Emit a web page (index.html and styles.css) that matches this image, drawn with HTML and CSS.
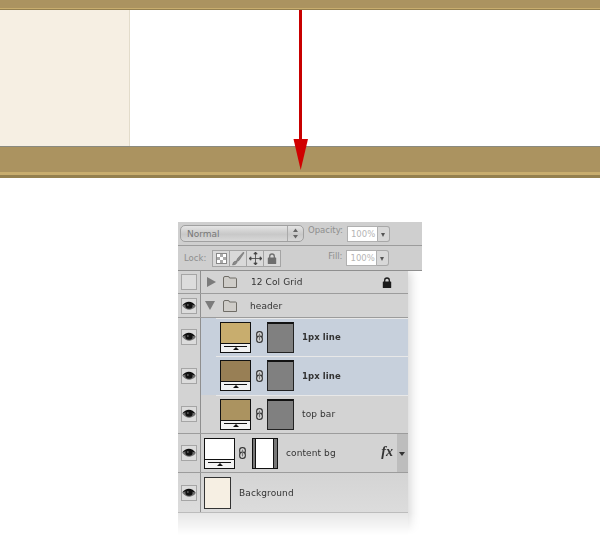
FILE: index.html
```html
<!DOCTYPE html>
<html lang="en">
<head>
    <meta charset="UTF-8">
    <title>Header layers</title>
    <link rel="stylesheet" href="styles.css">
</head>
<body>

<svg class="defs" width="0" height="0">
    <symbol id="eye" viewBox="0 0 14 10">
        <path d="M0.500 5 C3 1 11 1 13.500 5.500 C10 9.800 4 9.800 0.500 5Z" fill="#6e6e6e"/>
        <path d="M0 4.800 C4 -0.500 10 -0.500 14 5.200 C10 2.800 4 2.800 0 4.800Z" fill="#0c0c0c"/>
        <ellipse cx="7" cy="4.800" rx="3.600" ry="3" fill="#111"/>
        <circle cx="5.900" cy="4" r="0.700" fill="#999"/>
    </symbol>
    <symbol id="folder" viewBox="0 0 16 12">
        <path d="M1.500 11.500 V2 Q1.500 0.500 3 0.500 H6 Q7.500 0.500 7.500 2 H13.500 Q14.500 2 14.500 3 V11.500Z" fill="#cfcdc9" stroke="#6f6c66"/>
    </symbol>
    <symbol id="chain" viewBox="0 0 7 12">
        <rect x="0.700" y="0.600" width="5.600" height="6.200" rx="2.700" fill="#ececec" stroke="#333" stroke-width="1.200"/>
        <rect x="0.700" y="5.200" width="5.600" height="6.200" rx="2.700" fill="#ececec" stroke="#333" stroke-width="1.200"/>
        <rect x="2.700" y="2.500" width="1.600" height="7" fill="#777"/>
    </symbol>
    <symbol id="lock" viewBox="0 0 10 11">
        <path d="M2.700 5 V3.200 Q2.700 1 5 1 Q7.300 1 7.300 3.200 V5" fill="none" stroke="currentColor" stroke-width="1.300"/>
        <rect x="0.800" y="4.500" width="8.400" height="6.500" rx="0.500" fill="currentColor"/>
    </symbol>
</svg>

<div class="band band-top"></div>
<div class="content">
    <div class="sidebar"></div>
    <div class="main"></div>
</div>
<div class="band band-bottom"></div>

<div class="arrow">
    <svg width="16" height="161" viewBox="0 0 16 161">
        <rect x="6" y="0" width="3" height="131" fill="#c80000"/>
        <path d="M0.500 129 H15 L7.700 160Z" fill="#d00000"/>
    </svg>
</div>

<div class="panel">
    <div class="panel-head">
        <div class="tool-row">
            <div class="blend-select">
                <span>Normal</span>
                <span class="stepper">
                    <svg width="7" height="11" viewBox="0 0 7 11"><path d="M3.500 0.500 L6 4 H1Z M1 7 H6 L3.500 10.500Z" fill="#666"/></svg>
                </span>
            </div>
            <span class="tool-label opacity-label">Opacity:</span>
            <div class="pct-box"><span class="pct-val">100%</span><span class="pct-btn"></span></div>
        </div>
        <div class="tool-row lock-row">
            <span class="tool-label">Lock:</span>
            <div class="lock-btns">
                <span class="lock-btn"><span class="checker"></span></span>
                <span class="lock-btn">
                    <svg width="14" height="15" viewBox="0 0 14 15"><path d="M12.500 1 L6.500 7.500 L5 11 L8 9.500 L13 2Z M4.500 10 Q2 10.500 1.500 14 Q5 14 6 11.500Z" fill="#8a8a8a" stroke="#666" stroke-width="0.500"/></svg>
                </span>
                <span class="lock-btn">
                    <svg width="15" height="15" viewBox="0 0 15 15"><path d="M7.500 1 V14 M1 7.500 H14 M5.800 3 L7.500 1 L9.200 3Z M5.800 12 L7.500 14 L9.200 12Z M3 5.800 L1 7.500 L3 9.200Z M12 5.800 L14 7.500 L12 9.200Z" fill="#444" stroke="#444" stroke-width="0.800"/></svg>
                </span>
                <span class="lock-btn lock-grey"><svg width="10" height="11"><use href="#lock"/></svg></span>
            </div>
            <span class="tool-label fill-label">Fill:</span>
            <div class="pct-box"><span class="pct-val">100%</span><span class="pct-btn"></span></div>
        </div>
    </div>

    <div class="layers-wrap">
        <div class="layers">
            <div class="layer row-grid group-row">
                <div class="eye-cell"><span class="eye-box"></span></div>
                <div class="layer-body">
                    <span class="tri tri-right"></span>
                    <svg class="folder" width="16" height="12"><use href="#folder"/></svg>
                    <span class="layer-name">12 Col Grid</span>
                    <svg class="lock-badge" width="10" height="11"><use href="#lock"/></svg>
                </div>
            </div>
            <div class="layer row-header group-row">
                <div class="eye-cell"><span class="eye-box"><svg width="14" height="10"><use href="#eye"/></svg></span></div>
                <div class="layer-body">
                    <span class="tri tri-down"></span>
                    <svg class="folder" width="16" height="12"><use href="#folder"/></svg>
                    <span class="layer-name">header</span>
                </div>
            </div>
            <div class="layer thumb-row selected joined first-nested">
                <div class="eye-cell"><span class="eye-box"><svg width="14" height="10"><use href="#eye"/></svg></span></div>
                <div class="layer-body nested">
                    <div class="thumb"><span class="swatch swatch-light"></span><span class="thumb-foot"><span class="foot-line"></span></span></div>
                    <svg class="chain" width="7" height="12"><use href="#chain"/></svg>
                    <div class="mask"></div>
                    <span class="layer-name bold">1px line</span>
                </div>
            </div>
            <div class="layer thumb-row selected joined">
                <div class="eye-cell"><span class="eye-box"><svg width="14" height="10"><use href="#eye"/></svg></span></div>
                <div class="layer-body nested">
                    <div class="thumb"><span class="swatch swatch-dark"></span><span class="thumb-foot"><span class="foot-line"></span></span></div>
                    <svg class="chain" width="7" height="12"><use href="#chain"/></svg>
                    <div class="mask"></div>
                    <span class="layer-name bold">1px line</span>
                </div>
            </div>
            <div class="layer thumb-row">
                <div class="eye-cell"><span class="eye-box"><svg width="14" height="10"><use href="#eye"/></svg></span></div>
                <div class="layer-body nested">
                    <div class="thumb"><span class="swatch swatch-mid"></span><span class="thumb-foot"><span class="foot-line"></span></span></div>
                    <svg class="chain" width="7" height="12"><use href="#chain"/></svg>
                    <div class="mask"></div>
                    <span class="layer-name">top bar</span>
                </div>
            </div>
            <div class="layer thumb-row">
                <div class="eye-cell"><span class="eye-box"><svg width="14" height="10"><use href="#eye"/></svg></span></div>
                <div class="layer-body">
                    <div class="thumb"><span class="swatch swatch-white"></span><span class="thumb-foot"><span class="foot-line"></span></span></div>
                    <svg class="chain chain-wide" width="7" height="12"><use href="#chain"/></svg>
                    <div class="mask mask-white"></div>
                    <span class="layer-name">content bg</span>
                    <span class="fx">fx</span>
                    <span class="fx-btn"></span>
                </div>
            </div>
            <div class="layer thumb-row last-row">
                <div class="eye-cell"><span class="eye-box"><svg width="14" height="10"><use href="#eye"/></svg></span></div>
                <div class="layer-body">
                    <div class="thumb thumb-plain"></div>
                    <span class="layer-name">Background</span>
                </div>
            </div>
            <div class="panel-fade"></div>
        </div>
    </div>
</div>

</body>
</html>
```

FILE: styles.css
```css
body {
    margin: 0;
    height: 557px;
    overflow: hidden;
    position: relative;
    background-color: #fff;
    font-family: "DejaVu Sans", sans-serif;
    font-size: 9px;
    color: #333;
}
.defs {
    position: absolute;
}
.band {
    background-color: #ab9360;
}
.band-top {
    height: 8px;
    border-bottom: 1px solid #c8ad6e;
    box-shadow: 0 1px 0 #94804f;
    margin-bottom: 1px;
}
.band-bottom {
    height: 25px;
    border-top: 1px solid #8a8a80;
    border-bottom: 3px solid #c8ad6e;
    box-shadow: 0 3px 0 #94804f;
}
.content {
    display: flex;
    height: 136px;
}
.sidebar {
    width: 129px;
    background-color: #f6efe3;
    border-right: 1px solid #e3dccb;
}
.main {
    flex: 1;
}
.arrow {
    position: absolute;
    left: 293px;
    top: 10px;
    line-height: 0;
}

.panel {
    width: 244px;
    margin: 47px 0 0 178px;
}
.panel-head {
    background-color: #cfcfcf;
}
.tool-row {
    display: flex;
    align-items: center;
    height: 23px;
    padding: 0 2px;
    border-bottom: 1px solid #9c9c9c;
}
.lock-row {
    height: 24px;
    padding: 0 2px 0 6px;
    border-bottom: 1px solid #8f8f8f;
}
.blend-select {
    display: flex;
    align-items: center;
    justify-content: space-between;
    box-sizing: border-box;
    width: 124px;
    height: 17px;
    padding-left: 6px;
    border: 1px solid #a0a0a0;
    border-radius: 5px;
    background: linear-gradient(#e4e4e4, #c8c8c8 55%, #d8d8d8);
    color: #777;
}
.stepper {
    display: flex;
    align-items: center;
    justify-content: center;
    width: 15px;
    height: 15px;
    border-left: 1px solid #aaa;
}
.tool-label {
    color: #8e8e8e;
    font-size: 8.5px;
    white-space: nowrap;
}
.opacity-label {
    margin: 0 0 8px 4px;
}
.fill-label {
    margin: 0 0 4px 48px;
}
.pct-box {
    display: flex;
    margin-left: 4px;
}
.pct-val {
    box-sizing: border-box;
    width: 31px;
    height: 16px;
    padding-left: 3px;
    line-height: 14px;
    background: #fff;
    border: 1px solid #b0b0b0;
    color: #b5b5b5;
    font-size: 8.5px;
}
.pct-btn {
    position: relative;
    box-sizing: border-box;
    width: 12px;
    height: 16px;
    border: 1px solid #a8a8a8;
    border-left: 0;
    border-radius: 0 3px 3px 0;
    background-color: #d8d8d8;
}
.pct-btn::after {
    content: "";
    position: absolute;
    left: 3px;
    top: 6px;
    border-top: 4px solid #555;
    border-left: 2px solid transparent;
    border-right: 2px solid transparent;
}
.lock-btns {
    display: flex;
    margin-left: 6px;
}
.lock-btn {
    display: flex;
    align-items: center;
    justify-content: center;
    box-sizing: border-box;
    width: 18px;
    height: 17px;
    border: 1px solid #a4a4a4;
    margin-right: -1px;
    background-color: #d9d9d9;
}
.lock-grey {
    color: #6e6e6e;
}
.checker {
    width: 9px;
    height: 9px;
    background: repeating-conic-gradient(#aaa 0 25%, #fff 0 50%) 0 0 / 6px 6px;
    border: 1px solid #888;
}

.layers-wrap {
    width: 244px;
    mask-image: linear-gradient(#000 calc(100% - 22px), transparent);
}
.layers {
    width: 230px;
    box-shadow: 2px 0 10px rgba(0, 0, 0, 0.18);
}
.layer {
    display: flex;
    box-sizing: border-box;
    border-bottom: 1px solid #9c9c9c;
    background-color: #d3d3d3;
}
.row-grid {
    height: 23px;
}
.row-header {
    height: 24px;
}
.thumb-row {
    height: 39px;
}
.first-nested {
    height: 38px;
}
.last-row {
    height: 40px;
    background: linear-gradient(#d4d4d4, #dcdcdc);
    border-bottom-color: #bcbcbc;
}
.joined {
    border-bottom: 0;
}
.selected .layer-body {
    background-color: #c7d0dc;
}
.eye-cell {
    display: flex;
    align-items: center;
    justify-content: center;
    flex-shrink: 0;
    width: 22px;
    border-right: 1px solid #8f8f8f;
}
.eye-box {
    display: flex;
    align-items: center;
    justify-content: center;
    box-sizing: border-box;
    width: 16px;
    height: 16px;
    border: 1px solid #a5a5a5;
    background-color: #dcdcdc;
}
.layer-body {
    position: relative;
    display: flex;
    align-items: center;
    flex: 1;
    min-width: 0;
    padding-left: 3px;
}
.nested {
    padding-left: 19px;
}
.nested::before {
    content: "";
    position: absolute;
    left: 15px;
    right: 0;
    top: 0;
    height: 1px;
    background-color: #e8e8e8;
}
.row-grid .layer-body {
    padding-left: 6px;
}
.row-header .layer-body {
    padding-left: 4px;
}
.tri {
    width: 0;
    height: 0;
}
.tri-right {
    border-left: 9px solid #7b7b7b;
    border-top: 5px solid transparent;
    border-bottom: 5px solid transparent;
}
.tri-down {
    border-top: 9px solid #7b7b7b;
    border-left: 5px solid transparent;
    border-right: 5px solid transparent;
}
.folder {
    margin-left: 6px;
}
.row-header .folder {
    margin-left: 7px;
}
.group-row .layer-name {
    margin-left: 13px;
}
.row-header .layer-name {
    margin-left: 12px;
}
.layer-name {
    margin-left: 8px;
    white-space: nowrap;
    letter-spacing: 0.1px;
}
.bold {
    font-weight: bold;
    font-size: 8.5px;
}
.lock-badge {
    position: absolute;
    right: 16px;
    top: 6px;
    color: #1c1c1c;
}
.thumb {
    display: flex;
    flex-direction: column;
    flex-shrink: 0;
    box-sizing: border-box;
    width: 31px;
    height: 31px;
    border: 1px solid #111;
}
.swatch {
    flex: 1;
}
.swatch-light {
    background-color: #c8ad6e;
}
.swatch-dark {
    background-color: #987f55;
}
.swatch-mid {
    background-color: #ab9360;
}
.swatch-white {
    background-color: #fff;
}
.thumb-foot {
    position: relative;
    box-sizing: border-box;
    height: 9px;
    background-color: #f2f2f2;
    border-top: 1px solid #111;
}
.foot-line {
    position: absolute;
    left: 3px;
    right: 3px;
    top: 2px;
    height: 1px;
    background-color: #111;
}
.foot-line::after {
    content: "";
    position: absolute;
    left: 9px;
    top: 1px;
    border-bottom: 3px solid #111;
    border-left: 3px solid transparent;
    border-right: 3px solid transparent;
}
.thumb-plain {
    width: 27px;
    height: 32px;
    background-color: #f6efe3;
    border-color: #333;
}
.chain {
    flex-shrink: 0;
    margin-left: 5px;
}
.chain-wide {
    margin-left: 4px;
}
.mask {
    flex-shrink: 0;
    box-sizing: border-box;
    width: 27px;
    height: 31px;
    margin-left: 4px;
    border-top: 2px solid #111;
    border-left: 1px solid #222;
    border-right: 1px solid #222;
    border-bottom: 1px solid #222;
    background-color: #808080;
}
.chain-wide + .mask {
    margin-left: 6px;
}
.mask-white {
    width: 26px;
    border: 1px solid #111;
    background: linear-gradient(to right, #777 2px, #111 2px, #111 3px, #fff 3px, #fff 20px, #111 20px, #111 21px, #777 21px);
}
.fx {
    position: absolute;
    right: 15px;
    top: 10px;
    font-family: "Liberation Serif", serif;
    font-style: italic;
    font-weight: bold;
    font-size: 14px;
    color: #333;
}
.fx-btn {
    position: absolute;
    right: 0;
    top: 0;
    bottom: 0;
    width: 11px;
    background-color: #bdbdbd;
}
.fx-btn::after {
    content: "";
    position: absolute;
    left: 2px;
    top: 18px;
    border-top: 4px solid #333;
    border-left: 3px solid transparent;
    border-right: 3px solid transparent;
}
.panel-fade {
    height: 22px;
    background-color: #e6e6e6;
}
```
